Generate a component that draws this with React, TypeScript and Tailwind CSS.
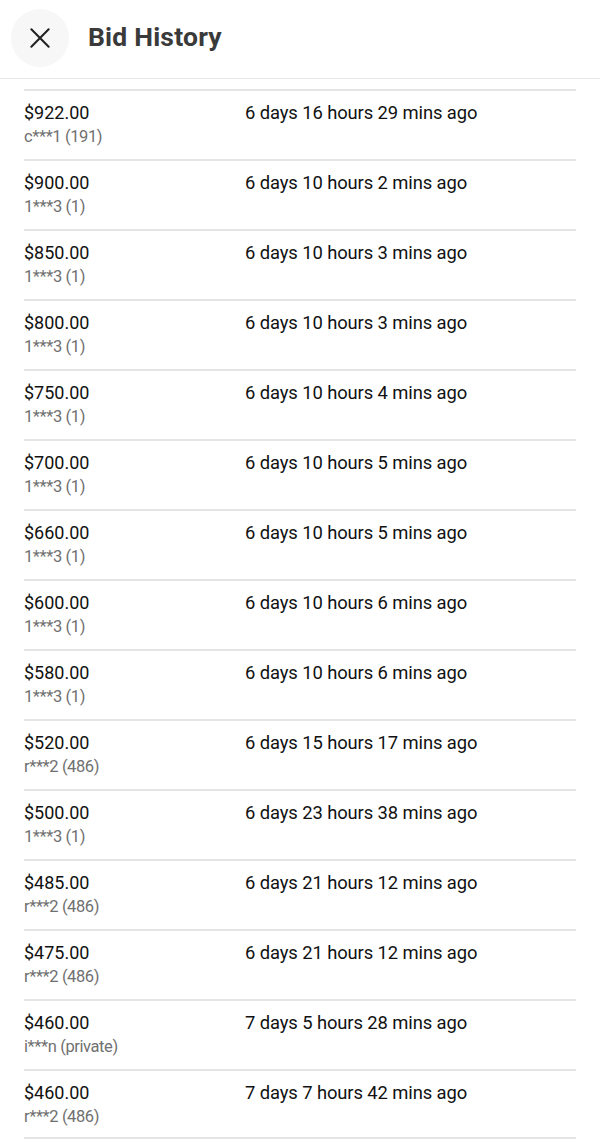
import React from 'react';

type Bid = { amount: string; bidder: string; time: string };

const bids: Bid[] = [
  { amount: '$922.00', bidder: 'c***1 (191)', time: '6 days 16 hours 29 mins ago' },
  { amount: '$900.00', bidder: '1***3 (1)', time: '6 days 10 hours 2 mins ago' },
  { amount: '$850.00', bidder: '1***3 (1)', time: '6 days 10 hours 3 mins ago' },
  { amount: '$800.00', bidder: '1***3 (1)', time: '6 days 10 hours 3 mins ago' },
  { amount: '$750.00', bidder: '1***3 (1)', time: '6 days 10 hours 4 mins ago' },
  { amount: '$700.00', bidder: '1***3 (1)', time: '6 days 10 hours 5 mins ago' },
  { amount: '$660.00', bidder: '1***3 (1)', time: '6 days 10 hours 5 mins ago' },
  { amount: '$600.00', bidder: '1***3 (1)', time: '6 days 10 hours 6 mins ago' },
  { amount: '$580.00', bidder: '1***3 (1)', time: '6 days 10 hours 6 mins ago' },
  { amount: '$520.00', bidder: 'r***2 (486)', time: '6 days 15 hours 17 mins ago' },
  { amount: '$500.00', bidder: '1***3 (1)', time: '6 days 23 hours 38 mins ago' },
  { amount: '$485.00', bidder: 'r***2 (486)', time: '6 days 21 hours 12 mins ago' },
  { amount: '$475.00', bidder: 'r***2 (486)', time: '6 days 21 hours 12 mins ago' },
  { amount: '$460.00', bidder: 'i***n (private)', time: '7 days 5 hours 28 mins ago' },
  { amount: '$460.00', bidder: 'r***2 (486)', time: '7 days 7 hours 42 mins ago' },
];

export default function App() {
  return (
    <div className="w-[600px] h-[1144px] overflow-hidden bg-white font-['Roboto',sans-serif]">
      {/* Header */}
      <div className="h-[79px] flex items-center border-b border-[#e8e8e8] pl-[11px]">
        <button className="w-[58px] h-[58px] rounded-full bg-[#f7f7f7] flex items-center justify-center -mt-[2px]">
          <svg width="26" height="26" viewBox="0 0 24 24" fill="none" stroke="#222" strokeWidth="1.9" strokeLinecap="round">
            <path d="M4 4l16 16M20 4L4 20" />
          </svg>
        </button>
        <h1 className="ml-[19px] -mt-[4px] text-[26.5px] font-bold text-[#3a3a3a] tracking-[0.2px]">Bid History</h1>
      </div>

      {/* Rows */}
      <div className="px-6 pt-[10px]">
        {bids.map((b, i) => (
          <div
            key={i}
            className="h-[70px] border-t-2 border-[#e5e5e5] flex pt-[11px] last:border-b-2"
          >
            <div className="w-[221px] flex flex-col">
              <span className="text-[18px] leading-[22px] text-[#111]">{b.amount}</span>
              <span className="mt-[2px] text-[16.5px] leading-[21px] text-[#707070] tracking-[-0.4px]">{b.bidder}</span>
            </div>
            <span className="text-[18.4px] leading-[22px] text-[#111] tracking-[-0.1px]">{b.time}</span>
          </div>
        ))}
      </div>
    </div>
  );
}
